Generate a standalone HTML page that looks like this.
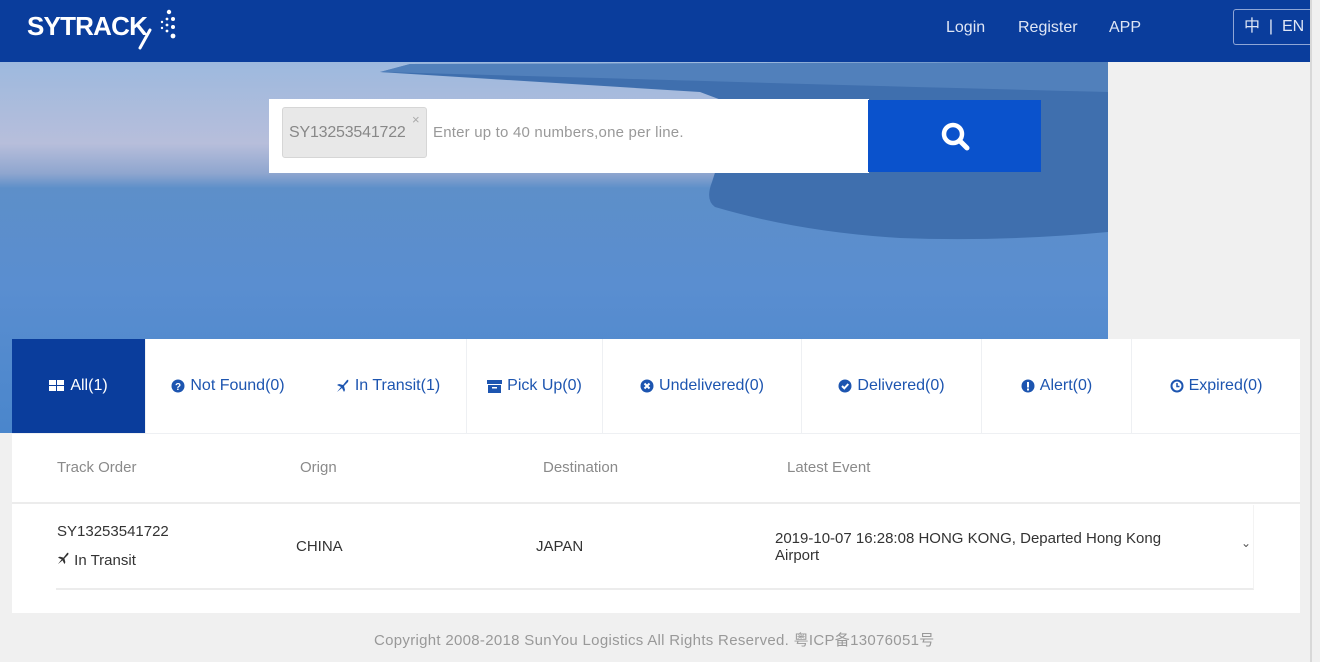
<!DOCTYPE html>
<html><head><meta charset="utf-8"><style>
*{margin:0;padding:0;box-sizing:border-box}
body{width:1320px;height:662px;overflow:hidden;background:#f0f0f0;font-family:"Liberation Sans","Noto Sans CJK SC",sans-serif;position:relative}
.a{position:absolute;white-space:nowrap}
.hdr{left:0;top:0;width:1310px;height:62px;background:#0a3d9c}
.nav{color:#dfe6f5;font-size:16px;top:19px}
.tab{top:339px;height:94px;background:#fff;color:#1d55b0;font-size:16px;display:flex;align-items:center;justify-content:center;border-right:1px solid #eef0f3}
.tab svg{margin-right:5px}
.th{top:459px;color:#8a8a8a;font-size:15px}
.td{color:#333;font-size:15px}
</style></head><body>
<div class="a hdr"></div>
<div class="a" style="left:27px;top:11px;color:#fff;font-weight:bold;font-size:26px;letter-spacing:-0.8px">SYTRACK</div>
<svg class="a" style="left:134px;top:6px" width="46" height="46" viewBox="0 0 46 46">
<g fill="#fff"><circle cx="35" cy="6" r="2.2"/><circle cx="39" cy="13" r="2"/><circle cx="39" cy="21" r="2"/><circle cx="39" cy="30" r="2.4"/><circle cx="33" cy="13" r="1.4"/><circle cx="33" cy="19" r="1.4"/><circle cx="33" cy="25" r="1.4"/><circle cx="28" cy="16" r="1.2"/><circle cx="28" cy="22" r="1.2"/></g>
<path d="M16 24 L6 42" stroke="#fff" stroke-width="3" stroke-linecap="round"/></svg>
<div class="a nav" style="left:946px">Login</div>
<div class="a nav" style="left:1018px">Register</div>
<div class="a nav" style="left:1109px">APP</div>
<div class="a" style="left:1233px;top:9px;width:77px;height:36px;border:1px solid #8fa6d6;border-right:none;border-radius:3px 0 0 3px;color:#dfe6f5;font-size:16px;padding:8px 0 0 10px;line-height:18px">中 &nbsp;|&nbsp; EN</div>
<div class="a" style="left:1310px;top:0;width:2px;height:662px;background:#d8d8d8"></div>
<svg class="a" style="left:0;top:62px" width="1108" height="371" viewBox="0 0 1108 371">
<defs><linearGradient id="s" x1="0" y1="0" x2="0" y2="1">
<stop offset="0" stop-color="#9db9de"/><stop offset="0.22" stop-color="#b7bedb"/><stop offset="0.3" stop-color="#8fa6cf"/><stop offset="0.34" stop-color="#5d8fc9"/><stop offset="0.6" stop-color="#5a8ed0"/><stop offset="1" stop-color="#4a86cc"/></linearGradient></defs>
<rect width="1108" height="371" fill="url(#s)"/>
<path d="M380 10 L410 2 L1108 0 L1108 170 Q1000 180 900 176 Q800 170 715 145 Q705 138 712 120 L720 95 L780 60 L700 30 Z" fill="#3f6fae"/>
<path d="M380 10 L410 2 L1108 0 L1108 30 Q800 22 600 16 Z" fill="#5a88c0" opacity=".7"/>
</svg>
<div class="a" style="left:269px;top:99px;width:600px;height:74px;background:#fff"></div>
<div class="a" style="left:282px;top:107px;width:145px;height:51px;background:#e8e8e8;border:1px solid #d6d6d6;border-radius:3px;color:#888;font-size:16px;padding:16px 0 0 6px;letter-spacing:-0.2px">SY13253541722</div>
<div class="a" style="left:412px;top:112px;color:#aaa;font-size:13px">×</div>
<div class="a" style="left:433px;top:124px;color:#999;font-size:15px;letter-spacing:0.2px">Enter up to 40 numbers,one per line.</div>
<div class="a" style="left:868px;top:100px;width:173px;height:72px;background:#0a52cc"></div>
<svg class="a" style="left:938px;top:119px" width="34" height="34" viewBox="0 0 34 34"><circle cx="15" cy="15" r="9" fill="none" stroke="#fff" stroke-width="4.5"/><path d="M22 22 L29 29" stroke="#fff" stroke-width="5" stroke-linecap="round"/></svg>
<div class="a" style="left:12px;top:339px;width:1288px;height:274px;background:#fff"></div>
<div class="a tab" style="left:12px;width:134px;background:#0a3d9c;color:#fff"><svg width="16" height="12"><rect x="0" y="0" width="7" height="5" fill="#fff"/><rect x="8" y="0" width="7" height="5" fill="#fff"/><rect x="0" y="6" width="7" height="5" fill="#fff"/><rect x="8" y="6" width="7" height="5" fill="#fff"/></svg>All(1)</div>
<div class="a tab" style="left:146px;width:164px;border-right:none"><svg width="14" height="14"><circle cx="7" cy="7" r="6.5" fill="#1d55b0"/><text x="7" y="11" fill="#fff" font-size="10" font-weight="bold" text-anchor="middle" font-family="Liberation Sans">?</text></svg>Not Found(0)</div>
<div class="a tab" style="left:310px;width:157px"><svg width="14" height="14" viewBox="0 0 14 14"><path d="M1 13 L5 8 L1 6 L3 5 L7 6 L11 1 Q13 0 12 3 L8 7 L9 11 L8 13 L6 9 L1 13Z" fill="#1d55b0"/></svg>In Transit(1)</div>
<div class="a tab" style="left:467px;width:136px"><svg width="15" height="13"><rect x="0" y="0" width="15" height="4" fill="#1d55b0"/><rect x="1" y="5" width="13" height="8" fill="#1d55b0"/><rect x="5" y="7" width="5" height="1.5" fill="#fff"/></svg>Pick Up(0)</div>
<div class="a tab" style="left:603px;width:199px"><svg width="14" height="14"><circle cx="7" cy="7" r="6.5" fill="#1d55b0"/><path d="M4.5 4.5 L9.5 9.5 M9.5 4.5 L4.5 9.5" stroke="#fff" stroke-width="2"/></svg>Undelivered(0)</div>
<div class="a tab" style="left:802px;width:180px"><svg width="14" height="14"><circle cx="7" cy="7" r="6.5" fill="#1d55b0"/><path d="M4 7 L6.3 9.3 L10.3 5" stroke="#fff" stroke-width="2" fill="none"/></svg>Delivered(0)</div>
<div class="a tab" style="left:982px;width:150px"><svg width="14" height="14"><circle cx="7" cy="7" r="6.5" fill="#1d55b0"/><rect x="6" y="3" width="2" height="5.5" fill="#fff"/><rect x="6" y="9.5" width="2" height="2" fill="#fff"/></svg>Alert(0)</div>
<div class="a tab" style="left:1132px;width:168px;border-right:none"><svg width="14" height="14"><circle cx="7" cy="7" r="5.5" fill="none" stroke="#1d55b0" stroke-width="2"/><path d="M7 4 V7.5 H9.5" stroke="#1d55b0" stroke-width="1.5" fill="none"/></svg>Expired(0)</div>
<div class="a" style="left:12px;top:433px;width:1288px;height:1px;background:#eef0f3"></div>
<div class="a th" style="left:57px">Track Order</div>
<div class="a th" style="left:300px">Orign</div>
<div class="a th" style="left:543px">Destination</div>
<div class="a th" style="left:787px">Latest Event</div>
<div class="a" style="left:12px;top:502px;width:1288px;height:2px;background:#ececec"></div>
<div class="a" style="left:56px;top:505px;width:1198px;height:85px;border-bottom:2px solid #ececec;border-right:1px solid #f3f3f3"></div>
<div class="a td" style="left:57px;top:523px">SY13253541722</div>
<div class="a td" style="left:57px;top:552px"><svg width="13" height="13" viewBox="0 0 14 14"><path d="M1 13 L5 8 L1 6 L3 5 L7 6 L11 1 Q13 0 12 3 L8 7 L9 11 L8 13 L6 9 L1 13Z" fill="#333"/></svg> In Transit</div>
<div class="a td" style="left:296px;top:538px">CHINA</div>
<div class="a td" style="left:536px;top:538px">JAPAN</div>
<div class="a td" style="left:775px;top:530px;line-height:17px">2019-10-07 16:28:08 HONG KONG, Departed Hong Kong<br>Airport</div>
<div class="a" style="left:1241px;top:536px;color:#555;font-size:12px">⌄</div>
<div class="a" style="left:374px;top:629px;color:#999;font-size:15px;letter-spacing:0.3px">Copyright 2008-2018 SunYou Logistics All Rights Reserved. 粤ICP备13076051号</div>
</body></html>
